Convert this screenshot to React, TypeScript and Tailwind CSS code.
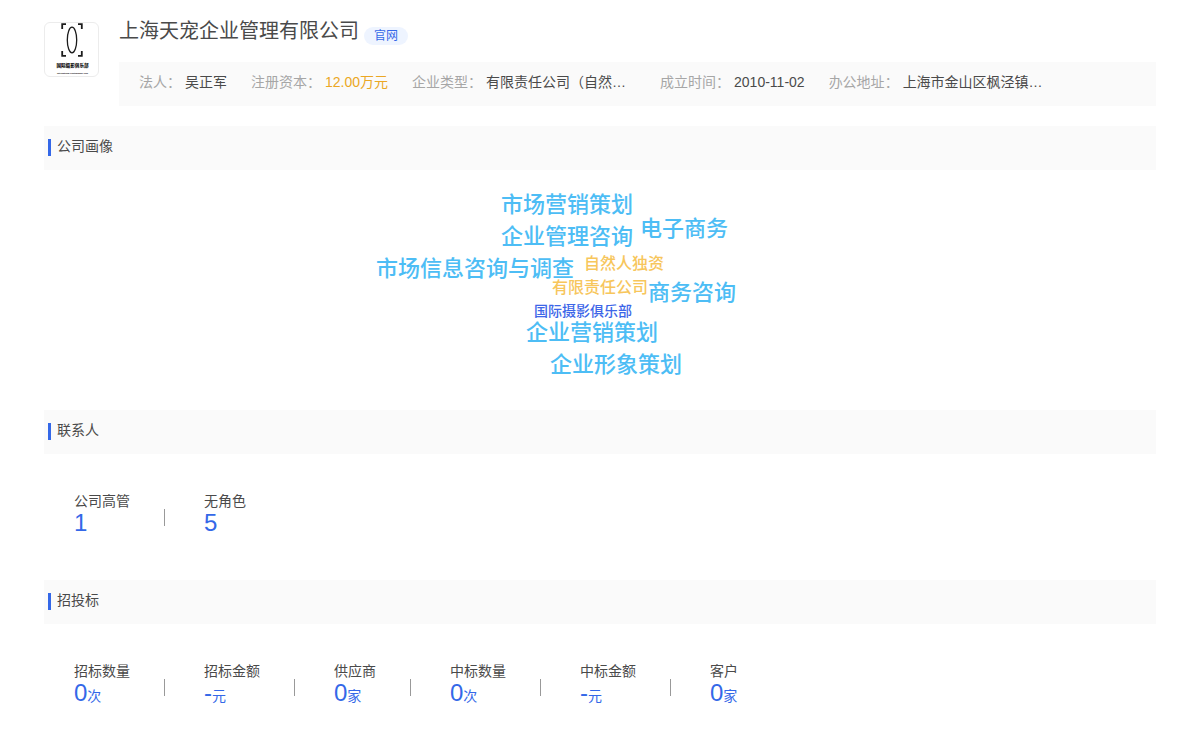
import { clsx } from "clsx";

interface Field {
  label: string;
  value: string;
  className?: string;
}

interface Stat {
  label: string;
  value: string;
  unit?: string;
}

const fields: Field[] = [
  { label: "法人", value: "吴正军" },
  { label: "注册资本", value: "12.00万元", className: "text-[#eba724]" },
  { label: "企业类型", value: "有限责任公司（自然…", className: "w-[150px]" },
  { label: "成立时间", value: "2010-11-02" },
  { label: "办公地址", value: "上海市金山区枫泾镇…", className: "w-[150px]" },
];

const wordSize = {
  lg: "text-[22px] font-medium text-[#4dbdf5]",
  md: "text-[16px] font-medium text-[#f7c65c]",
  sm: "text-[14px] font-medium text-[#3d66e8]",
};

const words: { text: string; size: keyof typeof wordSize; pos: string }[] = [
  { text: "市场营销策划", size: "lg", pos: "left-[141px] top-[24px]" },
  { text: "企业管理咨询", size: "lg", pos: "left-[141px] top-[56px]" },
  { text: "电子商务", size: "lg", pos: "left-[280px] top-[48px]" },
  { text: "市场信息咨询与调查", size: "lg", pos: "left-[16px] top-[88px]" },
  { text: "自然人独资", size: "md", pos: "left-[224px] top-[86px]" },
  { text: "有限责任公司", size: "md", pos: "left-[192px] top-[110px]" },
  { text: "商务咨询", size: "lg", pos: "left-[288px] top-[112px]" },
  { text: "国际摄影俱乐部", size: "sm", pos: "left-[174px] top-[134px]" },
  { text: "企业营销策划", size: "lg", pos: "left-[166px] top-[152px]" },
  { text: "企业形象策划", size: "lg", pos: "left-[190px] top-[184px]" },
];

const contacts: Stat[] = [
  { label: "公司高管", value: "1" },
  { label: "无角色", value: "5" },
];

const bids: Stat[] = [
  { label: "招标数量", value: "0", unit: "次" },
  { label: "招标金额", value: "-", unit: "元" },
  { label: "供应商", value: "0", unit: "家" },
  { label: "中标数量", value: "0", unit: "次" },
  { label: "中标金额", value: "-", unit: "元" },
  { label: "客户", value: "0", unit: "家" },
];

function Logo() {
  return (
    <div className="mt-[5px] size-[55px] shrink-0 overflow-hidden rounded-md border border-[#ececec]">
      <svg viewBox="0 0 53 53" className="size-full" role="img" aria-label="国际摄影俱乐部">
        <g fill="none" stroke="#1c1c1c">
          <path d="M21 1.2H17.2V6M33 1.2h3.8V6M17.2 28v4.8H21M36.8 28v4.8H33" strokeWidth="1.8" />
          <ellipse cx="27" cy="17" rx="4.7" ry="12.8" strokeWidth="1.3" />
        </g>
        <g textAnchor="middle" fill="#111">
          <text x="27.5" y="44" fontSize="4.6" className="font-black">
            国际摄影俱乐部
          </text>
          <text x="27.5" y="51.3" fontSize="2.1" className="font-bold">
            International Photography Club
          </text>
        </g>
      </svg>
    </div>
  );
}

function SectionTitle({ title }: { title: string }) {
  return (
    <div className="flex gap-1.5 bg-[#fafafa] px-1 pt-2.5 pb-3.5">
      <span className="h-[17px] w-[3px] self-end bg-[#3468e8]" />
      <h2 className="text-sm leading-5">{title}</h2>
    </div>
  );
}

function StatRow({ stats }: { stats: Stat[] }) {
  return (
    <dl className="flex flex-wrap px-[30px] pt-[37px] pb-[45px]">
      {stats.map((s, i) => (
        <div key={s.label} className="flex">
          {i > 0 && <span className="mt-[18px] mr-[39px] ml-[34px] h-[17px] w-px bg-[#999]" />}
          <div>
            <dt className="text-sm leading-5">{s.label}</dt>
            <dd className="text-2xl leading-6 text-[#3468e8]">
              {s.value}
              {s.unit && <span className="text-sm leading-6">{s.unit}</span>}
            </dd>
          </div>
        </div>
      ))}
    </dl>
  );
}

export default function App() {
  return (
    <main
      lang="zh-CN"
      className="bg-white px-11 pt-[17px] font-['Liberation_Sans','Noto_Sans_CJK_SC',sans-serif] text-[#4a4a4a]"
    >
      <header className="flex gap-5">
        <Logo />
        <div className="min-w-0 flex-1">
          <div className="mb-[17px] flex items-end gap-[5px]">
            <h1 className="text-xl leading-7">上海天宠企业管理有限公司</h1>
            <a
              href="#"
              className="rounded-full bg-[#eef4ff] px-2.5 text-xs leading-[18px] text-[#3468e8]"
            >
              官网
            </a>
          </div>
          <dl className="flex flex-wrap gap-x-6 bg-[#fafafa] px-5 pt-2.5 pb-3.5 text-sm leading-5">
            {fields.map((f) => (
              <div key={f.label} className="flex gap-1">
                <dt className="text-[#a6a6a6]">{f.label}：</dt>
                <dd className={clsx("whitespace-nowrap", f.className)}>{f.value}</dd>
              </div>
            ))}
          </dl>
        </div>
      </header>

      <section className="mt-5">
        <SectionTitle title="公司画像" />
        <div className="relative mx-auto h-60 w-[480px]">
          {words.map((w) => (
            <span
              key={w.text}
              className={clsx("absolute leading-none whitespace-nowrap", wordSize[w.size], w.pos)}
            >
              {w.text}
            </span>
          ))}
        </div>
      </section>

      <section>
        <SectionTitle title="联系人" />
        <StatRow stats={contacts} />
      </section>

      <section>
        <SectionTitle title="招投标" />
        <StatRow stats={bids} />
      </section>
    </main>
  );
}
